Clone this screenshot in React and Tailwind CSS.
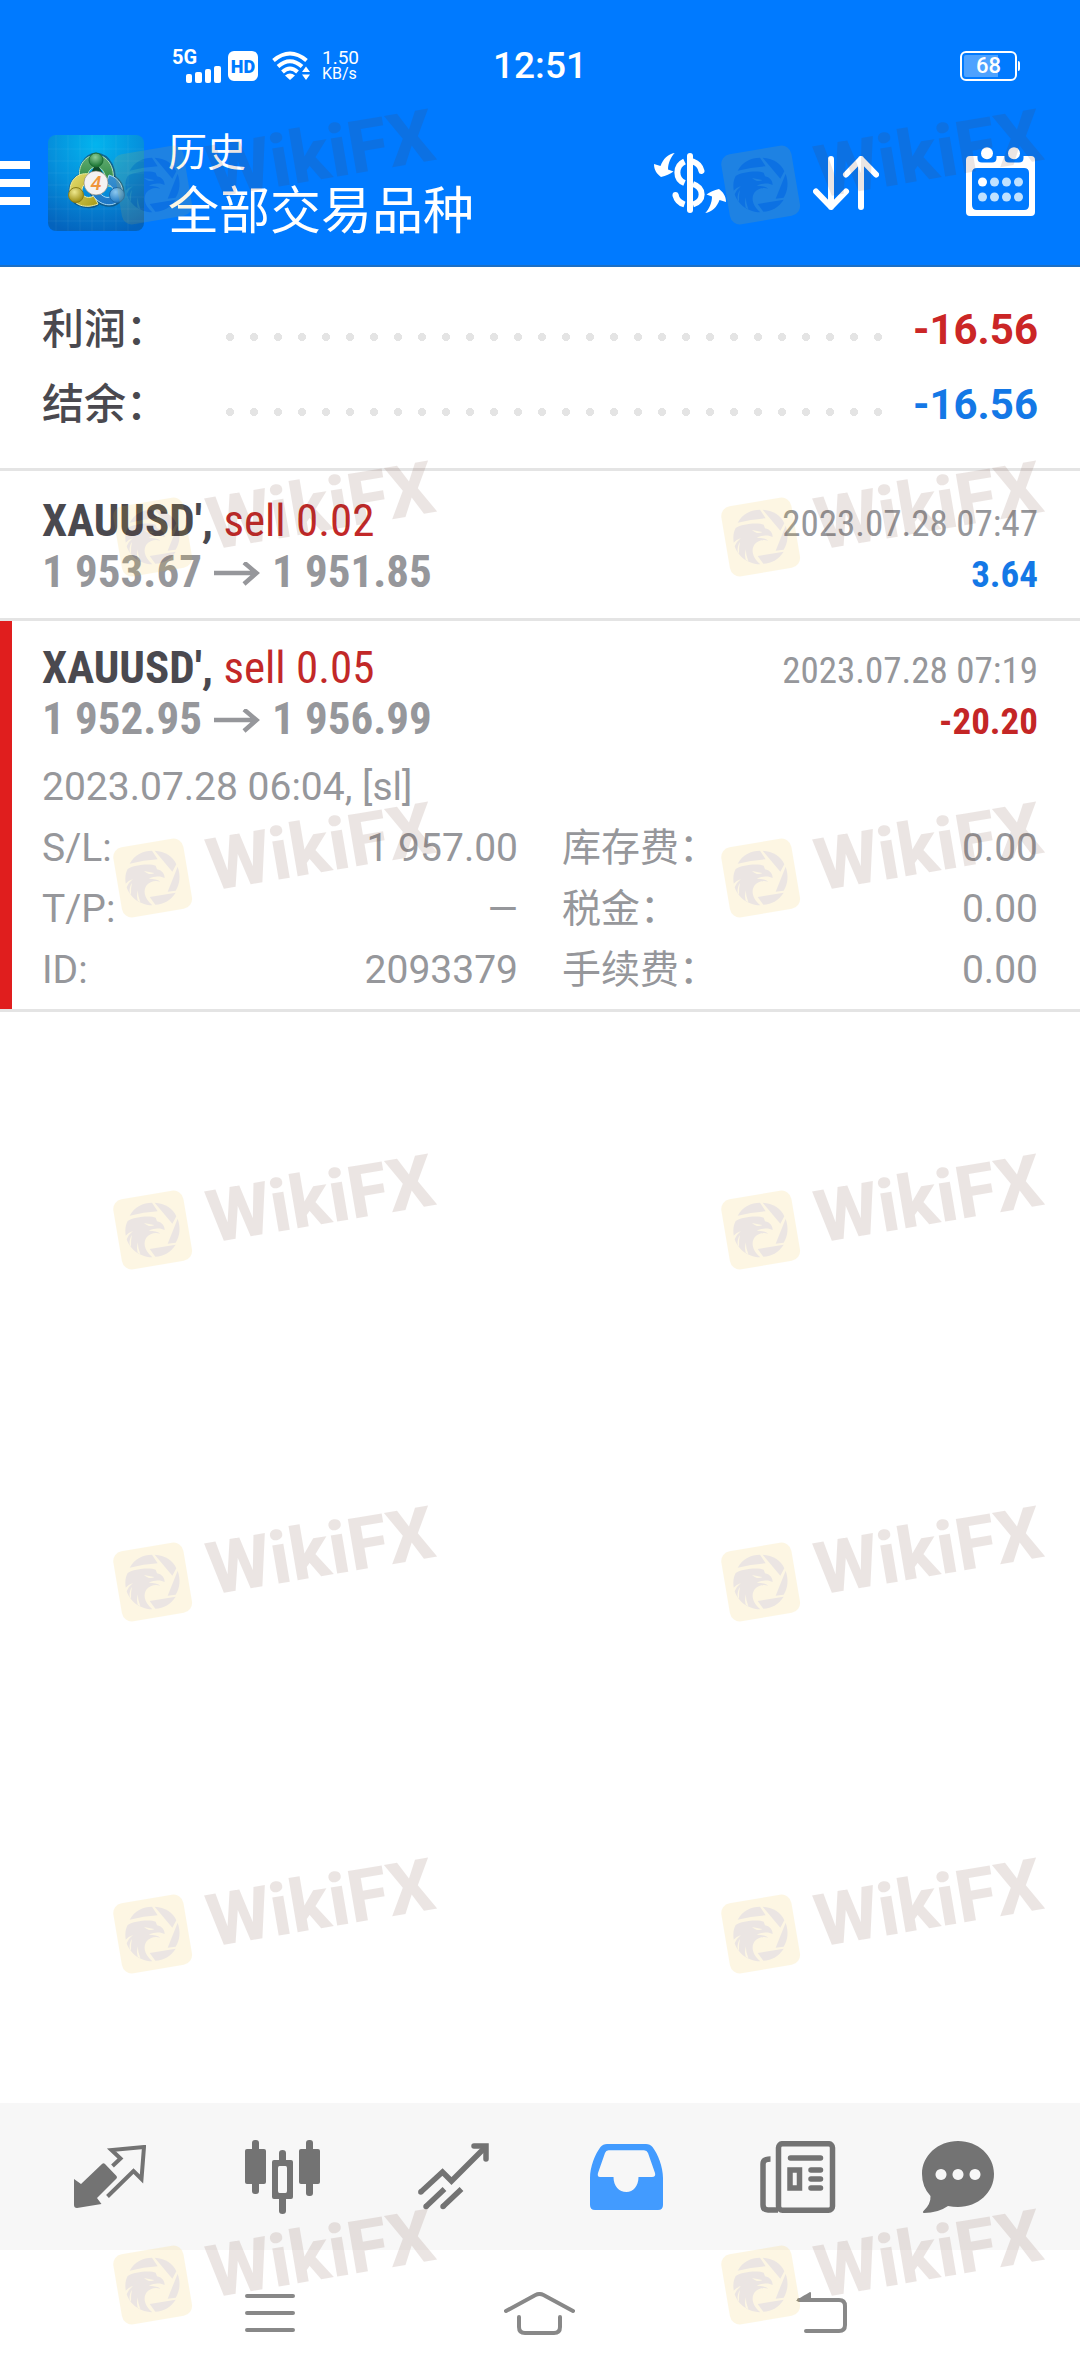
import React from 'react';
import { clsx } from 'clsx';

const summary = [
    { label: '利润：', value: '-16.56', color: 'text-[#cb2626]' },
    { label: '结余：', value: '-16.56', color: 'text-[#1478e6]' },
];

const deals = [
    {
        symbol: "XAUUSD'",
        action: 'sell 0.02',
        open: '1 953.67',
        close: '1 951.85',
        time: '2023.07.28 07:47',
        profit: '3.64',
        win: true,
    },
    {
        symbol: "XAUUSD'",
        action: 'sell 0.05',
        open: '1 952.95',
        close: '1 956.99',
        time: '2023.07.28 07:19',
        profit: '-20.20',
        win: false,
        comment: '2023.07.28 06:04, [sl]',
        details: [
            ['S/L:', '1 957.00'],
            ['库存费：', '0.00'],
            ['T/P:', '—'],
            ['税金：', '0.00'],
            ['ID:', '2093379'],
            ['手续费：', '0.00'],
        ],
    },
];

const watermarkRows = [
    'top-[144px]',
    'top-[496px]',
    'top-[837px]',
    'top-[1189px]',
    'top-[1541px]',
    'top-[1893px]',
    'top-[2244px]',
];

/* Status bar */
const SignalIcon = () => (
    <svg width="36" height="18" viewBox="0 0 36 18" fill="currentColor">
        <rect x="0" y="9" width="6" height="9" rx="2" />
        <rect x="9" y="7" width="7" height="11" rx="2" />
        <rect x="19" y="4" width="6" height="14" rx="2" />
        <rect x="28" y="1" width="7" height="17" rx="2" />
    </svg>
);

const WifiIcon = () => (
    <svg width="38" height="30" viewBox="0 0 38 30" fill="none" stroke="currentColor" strokeWidth="4">
        <path d="M1.500 9.500 Q18 -4.500 34.500 9.500" />
        <path d="M6 15.500 Q18 5 30 15.500" />
        <path d="M10.500 21 Q18 14 25.500 21" />
        <path d="M18 29 L13 24.500 Q18 20.500 23 24.500 Z" fill="currentColor" stroke="none" />
        <path d="M34 15.500 l4 5.500 h-8 Z M34 29 l4 -5.500 h-8 Z" fill="currentColor" stroke="none" />
    </svg>
);

const StatusBar = () => (
    <div className="grid h-[132px] grid-cols-[1fr_auto_1fr] items-center px-[60px]">
        <div className="flex items-center pl-28">
            <div className="flex w-[56px] flex-col">
                <span className="text-[20px] leading-[16px] font-bold">5G</span>
                <div className="pl-3.5">
                    <SignalIcon />
                </div>
            </div>
            <span className="flex h-[30px] w-[30px] items-center justify-center rounded-md bg-white text-[18px] font-black text-[#007aff]">
                HD
            </span>
            <div className="pr-3 pl-3.5">
                <WifiIcon />
            </div>
            <div className="flex flex-col">
                <span className="text-[19px] leading-[16px]">1.50</span>
                <span className="text-[16px] leading-[16px]">KB/s</span>
            </div>
        </div>
        <span className="text-[37px] leading-[40px] font-medium">12:51</span>
        <div className="flex items-center justify-end">
            <div className="relative flex h-[30px] w-[57px] items-center justify-center rounded-md border-2 border-white p-0.5">
                <div className="absolute inset-y-0.5 left-0.5 w-[34px] rounded-l-xs bg-[#4ea2ff]" />
                <span className="relative text-[22px] leading-[22px] font-medium">68</span>
            </div>
            <div className="ml-px h-2.5 w-0.5 rounded-r bg-white" />
        </div>
    </div>
);

/* Toolbar */
const MenuIcon = () => (
    <svg width="30" height="44" viewBox="0 0 30 44" fill="currentColor">
        <rect y="0" width="30" height="8" />
        <rect y="18" width="30" height="8" />
        <rect y="36" width="30" height="8" />
    </svg>
);

const AppLogo = () => (
    <svg className="shrink-0" width="96" height="96" viewBox="0 0 96 96">
        <defs>
            <radialGradient id="tile" cx="50%" cy="10%" r="95%">
                <stop offset="0" stopColor="#03b4ee" />
                <stop offset="0.5" stopColor="#0590dc" />
                <stop offset="1" stopColor="#0463bd" />
            </radialGradient>
            <linearGradient id="green" x1="0" y1="0" x2="0" y2="1">
                <stop offset="0" stopColor="#63ad74" />
                <stop offset="1" stopColor="#238238" />
            </linearGradient>
            <linearGradient id="yellow" x1="0" y1="0" x2="1" y2="1">
                <stop offset="0" stopColor="#e8e070" />
                <stop offset="1" stopColor="#a89a18" />
            </linearGradient>
            <linearGradient id="blue" x1="0" y1="0" x2="0" y2="1">
                <stop offset="0" stopColor="#3a93cf" />
                <stop offset="1" stopColor="#1b75c6" />
            </linearGradient>
            <radialGradient id="greenBall" cx="45%" cy="30%" r="70%">
                <stop offset="0" stopColor="#8fce9b" />
                <stop offset="1" stopColor="#13702c" />
            </radialGradient>
            <radialGradient id="yellowBall" cx="40%" cy="30%" r="70%">
                <stop offset="0" stopColor="#efe98e" />
                <stop offset="1" stopColor="#9b8b10" />
            </radialGradient>
            <radialGradient id="blueBall" cx="40%" cy="30%" r="70%">
                <stop offset="0" stopColor="#8cc8ef" />
                <stop offset="1" stopColor="#1f79c2" />
            </radialGradient>
        </defs>
        <rect width="96" height="96" rx="8" fill="url(#tile)" />
        <path
            d="M8 0V96M20 0V96M32 0V96M44 0V96M56 0V96M68 0V96M80 0V96M0 14H96M0 26H96M0 38H96M0 50H96M0 62H96M0 74H96M0 86H96"
            stroke="#fff"
            strokeOpacity="0.06"
        />
        <g stroke="#124a6e" strokeOpacity="0.7" strokeWidth="4.500" fill="none">
            <path d="M35 46 C29 34 38 20 48 20 C60 20 70 36 63 52" />
            <path d="M42 40 C28 38 20 50 24 62 C28 72 44 73 50 68" />
            <path d="M60 41 C70 42 78 54 72 64 C66 73 50 71 44 58" />
        </g>
        <path
            d="M32 44 C29 30 38 20 48 20 C60 20 69 34 64 52 L57 50 C60 41 54 32 49 32 C43 32 40 36 39 43 Z"
            fill="url(#green)"
            stroke="#b9e2b5"
            strokeWidth="1"
        />
        <path
            d="M41 39 C29 37 21 46 22 58 C25 71 38 74 50 69 L46 61 C38 65 33 60 34 54 C35 50 37 48 41 47 Z"
            fill="url(#yellow)"
            stroke="#f2efa4"
            strokeWidth="1"
        />
        <path
            d="M61 40 C72 43 77 54 73 62 C68 74 50 72 43 57 L50 55 C54 63 62 65 65 59 C67 55 64 50 58 49 Z"
            fill="url(#blue)"
            stroke="#a6d8f5"
            strokeWidth="1"
        />
        <path d="M42 40 L46 32 H51 L56 40 Z" fill="#0e4a28" />
        <circle cx="48" cy="25" r="7" fill="url(#greenBall)" stroke="#1c6a35" />
        <circle cx="28" cy="60" r="7.500" fill="url(#yellowBall)" stroke="#8a7d18" />
        <circle cx="69" cy="60" r="7.500" fill="url(#blueBall)" stroke="#1d69a8" />
        <circle cx="48" cy="48" r="12" fill="#f4f2f2" stroke="#8a8170" strokeWidth="0.600" />
        <text
            x="48"
            y="55"
            textAnchor="middle"
            fontFamily="Roboto, sans-serif"
            fontSize="20"
            fontStyle="italic"
            fontWeight="500"
            fill="#f0953c"
        >
            4
        </text>
    </svg>
);

const CurrencyIcon = () => (
    <svg width="72" height="60" viewBox="0 0 72 60" fill="none" stroke="currentColor" strokeWidth="6">
        <path
            id="swap"
            d="M20.700 0 C14 1 9 6 6.500 13 L0 11 C0 17 3 21 7 24 C12 23 16 21 19.500 18.500 L14 16.500 C14 10 17 4 20.700 0 Z"
            fill="currentColor"
            stroke="none"
        />
        <use href="#swap" transform="rotate(180 36 30)" />
        <path d="M36 3 V57" strokeLinecap="round" />
        <path d="M30.500 8.500 C21 13 21 26 30.500 30" />
        <path d="M39 8.500 Q46 11 47.500 18" strokeLinecap="round" />
        <path d="M39 31 C50.500 35 50.500 48 39 51.500" />
        <path d="M21.500 42 Q23 49 30.500 51.500" />
        <circle cx="21.500" cy="42" r="3" fill="currentColor" stroke="none" />
    </svg>
);

const SortIcon = () => (
    <svg
        width="66"
        height="54"
        viewBox="0 0 66 54"
        fill="none"
        stroke="currentColor"
        strokeWidth="6"
        strokeLinecap="round"
        strokeLinejoin="round"
    >
        <path d="M18 3 V51 M3 35.500 L18 51 L33 35.500" />
        <path d="M48 51 V3 M33 18.500 L48 3 L63 18.500" />
    </svg>
);

const CalendarIcon = () => (
    <svg width="69" height="72" viewBox="0 0 69 72" fill="currentColor">
        <path
            fillRule="evenodd"
            d="M4 9 H11.500 V11 Q11.500 15.500 16 15.500 H26 Q30.500 15.500 30.500 11 V9 H38.500 V11 Q38.500 15.500 43 15.500 H53 Q57.500 15.500 57.500 11 V9 H65 Q69 9 69 13 V65 Q69 69 65 69 H4 Q0 69 0 65 V13 Q0 9 4 9 Z M11 21 Q6 21 6 26 V58 Q6 63 11 63 H58 Q63 63 63 58 V26 Q63 21 58 21 Z"
        />
        <circle cx="21" cy="6.300" r="6" />
        <circle cx="48" cy="6.300" r="6" />
        <circle cx="16.500" cy="35" r="4.500" />
        <g fill="#bfe1ff">
            <circle cx="28.500" cy="35" r="4.500" />
            <circle cx="40.500" cy="35" r="4.500" />
            <circle cx="52.500" cy="35" r="4.500" />
            <circle cx="16.500" cy="50" r="4.500" />
            <circle cx="28.500" cy="50" r="4.500" />
            <circle cx="40.500" cy="50" r="4.500" />
            <circle cx="52.500" cy="50" r="4.500" />
        </g>
    </svg>
);

const Header = () => (
    <header className="border-b-2 border-[#1c6fc4] bg-[#007aff] text-white">
        <StatusBar />
        <div className="mb-[31px] flex h-[102px] items-center pr-[45px]">
            <button type="button" aria-label="菜单" className="mr-[18px]">
                <MenuIcon />
            </button>
            <AppLogo />
            <div className="ml-6 flex-1">
                <p className="text-[39px] leading-[58px]">历史</p>
                <h1 className="text-[51px] leading-[60px]">全部交易品种</h1>
            </div>
            <div className="flex items-center">
                <button type="button" aria-label="货币" className="mr-[87px]">
                    <CurrencyIcon />
                </button>
                <button type="button" aria-label="排序" className="mr-[87px]">
                    <SortIcon />
                </button>
                <button type="button" aria-label="日期">
                    <CalendarIcon />
                </button>
            </div>
        </div>
    </header>
);

/* History */
const Summary = () => (
    <dl className="border-b-[3px] border-[#e4e4e4] px-[42px] pt-[25px] pb-[26px] text-[42px] leading-[75px]">
        {summary.map((row) => (
            <div key={row.label} className="flex items-center">
                <dt className="w-44 font-medium text-[#4a494f]">{row.label}</dt>
                <div className="mt-3.5 h-2 flex-1 bg-[radial-gradient(circle,#e4e4e4_4px,transparent_4px)] bg-[length:24px_8px]" />
                <dd className={clsx('w-[148px] text-right font-bold', row.color)}>{row.value}</dd>
            </div>
        ))}
    </dl>
);

const PriceArrow = () => (
    <svg
        className="mx-3 inline-block"
        width="46"
        height="26"
        viewBox="0 0 46 26"
        fill="none"
        stroke="currentColor"
        strokeWidth="4.500"
    >
        <path d="M0 11 H42 M30 0.500 L42.500 11 L30 22" />
    </svg>
);

const Deal = ({ deal }) => (
    <li
        className={clsx(
            'border-b-[3px] border-[#e4e4e4] px-[42px]',
            deal.details
                ? 'bg-[linear-gradient(#e01e1e,#e01e1e)] bg-[length:12px_100%] bg-no-repeat pt-[23px] pb-2'
                : 'pt-[26px] pb-[19px]'
        )}
    >
        <div className="font-['Roboto_Condensed','Liberation_Sans_Narrow','Noto_Sans_CJK_SC',sans-serif] leading-[48px]">
            <div className="flex items-baseline justify-between">
                <p className="text-[45px] font-bold text-[#4a494f]">
                    {deal.symbol}, <span className="font-normal text-[#c22828]">{deal.action}</span>
                </p>
                <time className="text-[37px] text-[#96979b]">{deal.time}</time>
            </div>
            <div className="flex items-baseline justify-between font-bold">
                <p className="text-[45px] text-[#96979b]">
                    {deal.open}
                    <PriceArrow />
                    {deal.close}
                </p>
                <p className={clsx('text-[37px]', deal.win ? 'text-[#1478e6]' : 'text-[#c42626]')}>{deal.profit}</p>
            </div>
        </div>
        {deal.details && (
            <div className="pt-[11px] text-[39px] leading-[61px] text-[#96979b]">
                <p>{deal.comment}</p>
                <dl className="grid grid-cols-2 gap-x-11">
                    {deal.details.map(([label, value]) => (
                        <div key={label} className="flex justify-between">
                            <dt>{label}</dt>
                            <dd>{value}</dd>
                        </div>
                    ))}
                </dl>
            </div>
        )}
    </li>
);

/* Bottom tabs */
const QuotesIcon = () => (
    <svg width="72" height="63" viewBox="0 0 72 63" fill="none" stroke="currentColor" strokeWidth="4">
        <path
            d="M0 34 L7 39 L28 19 Q29.500 17.500 31 19 L42.500 31 Q43.500 32 42.500 33.500 L23 53 L27.500 59 L3 63 Q0 63 0 60 Z"
            fill="currentColor"
            stroke="none"
        />
        <path d="M38.500 21 L46.500 13.500 L37.500 5 L70 2 L67.500 34 L59.500 26 L33.500 51.500" />
    </svg>
);

const ChartsIcon = () => (
    <svg width="75" height="74" viewBox="0 0 75 74" fill="currentColor">
        <rect x="0" y="9" width="21" height="35" rx="2" />
        <rect x="7" y="0" width="7" height="54" rx="3" />
        <rect x="54" y="9" width="21" height="35" rx="2" />
        <rect x="61" y="0" width="7" height="56" rx="3" />
        <path
            fillRule="evenodd"
            d="M29 20 H46 Q48 20 48 22 V57 Q48 59 46 59 H29 Q27 59 27 57 V22 Q27 20 29 20 Z M34.500 26 Q33 26 33 28 V51 Q33 53 34.500 53 H40.500 Q42 53 42 51 V28 Q42 26 40.500 26 Z"
        />
        <path d="M34 21 V13 Q34 10 37.500 10 Q41 10 41 13 V21 Z M34 58 V71 Q34 74 37.500 74 Q41 74 41 71 V58 Z" />
    </svg>
);

const TradeIcon = () => (
    <svg width="72" height="67" viewBox="0 0 72 67" fill="none" stroke="currentColor" strokeWidth="5.500">
        <path d="M2.800 49 L24.500 29 L33.500 38 L67 4.500" />
        <path d="M56 3 H68 V16" strokeLinecap="round" />
        <path d="M8 63.500 L26.500 46 M25 63.500 L43.500 46" />
        <g fill="currentColor" stroke="none">
            <circle cx="2.800" cy="49" r="2.700" />
            <circle cx="8" cy="63.500" r="2.700" />
            <circle cx="25" cy="63.500" r="2.700" />
        </g>
    </svg>
);

const HistoryIcon = () => (
    <svg width="73" height="66" viewBox="0 0 73 66" fill="currentColor">
        <path
            fillRule="evenodd"
            d="M0 34 C0 23 5 10 10.500 3 Q13 0 17 0 H56 Q60 0 62.500 3 C68 10 73 23 73 34 V61 Q73 66 68 66 H5 Q0 66 0 61 Z M18.500 6.300 Q16 6.500 15 9 L8 29 Q7 33 10 33 H23.500 C23.500 42 29 48 36.500 48 C43 48 48.500 42 48.500 33 H62 Q66 33 65 29 L58 9 Q57 6.500 54 6.300 Z"
        />
    </svg>
);

const NewsIcon = () => (
    <svg width="76" height="72" viewBox="0 0 76 72" fill="none" stroke="currentColor" strokeWidth="5.500">
        <rect x="18.500" y="2.700" width="54" height="66.500" rx="4" />
        <path d="M10.500 18 Q3 18 3 23 V64 Q3 69 8 69 H18" />
        <path d="M30.500 17 H60.500 M51 29 H60.500 M51 38 H60.500 M51 47 H60.500" strokeLinecap="round" />
        <rect x="30" y="29" width="9.500" height="18" />
    </svg>
);

const ChatIcon = () => (
    <svg width="72" height="72" viewBox="0 0 72 72" fill="currentColor">
        <path
            fillRule="evenodd"
            d="M36 0 C56 0 72 14.500 72 33 C72 51.500 56 66 36 66 Q31 66 26 65 Q16 72 2 72 Q0 71.500 1.500 70 Q9 63 8.500 55 Q0 46 0 33 C0 14.500 16 0 36 0 Z M19 28 a5.500 5.500 0 1 0 0.010 0 Z M36 28 a5.500 5.500 0 1 0 0.010 0 Z M53 28 a5.500 5.500 0 1 0 0.010 0 Z"
        />
    </svg>
);

const tabs = [
    { name: '行情', Icon: QuotesIcon },
    { name: '图表', Icon: ChartsIcon },
    { name: '交易', Icon: TradeIcon },
    { name: '历史', Icon: HistoryIcon, active: true },
    { name: '新闻', Icon: NewsIcon },
    { name: '消息', Icon: ChatIcon, className: 'pr-6' },
];

const TabBar = () => (
    <nav className="flex h-[147px] items-center bg-[#f7f7f7] px-6">
        {tabs.map(({ name, Icon, active, className }) => (
            <button
                key={name}
                type="button"
                aria-label={name}
                className={clsx('flex w-1/6 justify-center', active ? 'text-[#429bff]' : 'text-[#737373]', className)}
            >
                <Icon />
            </button>
        ))}
    </nav>
);

const SystemNav = () => (
    <div className="flex h-[126px] items-center px-[135px] text-[#888]">
        <button type="button" aria-label="最近" className="flex w-1/3 justify-center">
            <svg width="50" height="40" viewBox="0 0 50 40" stroke="currentColor" strokeWidth="4" strokeLinecap="round">
                <path d="M2 3 H48 M2 20 H48 M2 37 H48" />
            </svg>
        </button>
        <button type="button" aria-label="主页" className="flex w-1/3 justify-center">
            <svg
                width="71"
                height="43"
                viewBox="0 0 71 43"
                fill="none"
                stroke="currentColor"
                strokeWidth="4"
                strokeLinecap="round"
            >
                <path d="M2 19 L31.500 3 Q35.500 1 39.500 3 L69 19" />
                <path d="M15 25 V35 Q15 41 21 41 H50 Q56 41 56 35 V25" />
            </svg>
        </button>
        <button type="button" aria-label="返回" className="flex w-1/3 justify-center pl-6">
            <svg
                width="51"
                height="42"
                viewBox="0 0 51 42"
                fill="none"
                stroke="currentColor"
                strokeWidth="4"
                strokeLinecap="round"
            >
                <path d="M3 8 H43 Q49 8 49 14 V33 Q49 39 43 39 H10" />
                <path d="M0 9 Q0 8 14 0 Q15 0 15 1 V9 Z" fill="currentColor" stroke="none" />
            </svg>
        </button>
    </div>
);

/* Watermark */
const Mark = () => (
    <div className="flex w-[340px] shrink-0 items-start opacity-[0.12]">
        <svg className="shrink-0" width="82" height="82" viewBox="35 145 246 246">
            <rect x="50.500" y="161.500" width="213" height="213" rx="30" transform="rotate(-9.600 157 268)" fill="#f0be21" />
            <g fill="#643221">
                <path d="M88 225 C102 199 128 186 155 186 L172 212 Q130 214 88 225 Z" />
                <path d="M163 186 C194 188 218 203 228 227 L216 249 Z" />
                <path d="M232 234 C241 260 239 285 226 306 L202 309 Z" />
                <path d="M226 312 C212 334 190 347 165 348 L148 325 Z" />
                <path d="M82 241 C100 228 150 224 166 231 C168 235 169 239 170 242 C184 245 193 254 193 268 C186 264 176 262 166 264 C156 264 150 267 146 270 C160 271 172 272 180 279 C163 274 148 279 139 290 C129 304 129 326 156 350 C110 348 75 315 75 270 C75 258 78 249 82 241 Z" />
            </g>
            <g fill="#f0be21">
                <path d="M131 247 L161 253 Q160 256 146 256 L138 252 Z" />
                <path d="M75 286 Q84 275 98 271 Q86 280 78 297 Z" />
                <path d="M88 312 Q86 295 95 283 Q91 297 92 318 Z" />
                <path d="M112 336 Q108 322 112 305 Q113 324 120 341 Z" />
            </g>
        </svg>
        <span className="-mt-5 ml-3 -rotate-[9.6deg] text-[73px] leading-[60px] font-extrabold text-[#643221]">
            WikiFX
        </span>
    </div>
);

const Watermark = () => (
    <div aria-hidden="true" className="pointer-events-none absolute inset-0 overflow-hidden">
        {watermarkRows.map((top) => (
            <div key={top} className={clsx('absolute inset-x-0 grid grid-cols-[608px_1fr] pl-28', top)}>
                <Mark />
                <Mark />
            </div>
        ))}
    </div>
);

const App = () => (
    <div className="relative flex min-h-screen flex-col bg-white font-['Roboto','Noto_Sans_CJK_SC',sans-serif]">
        <Header />
        <main className="flex-1">
            <Summary />
            <ul>
                {deals.map((deal) => (
                    <Deal key={deal.time} deal={deal} />
                ))}
            </ul>
        </main>
        <TabBar />
        <SystemNav />
        <Watermark />
    </div>
);

export default App;
